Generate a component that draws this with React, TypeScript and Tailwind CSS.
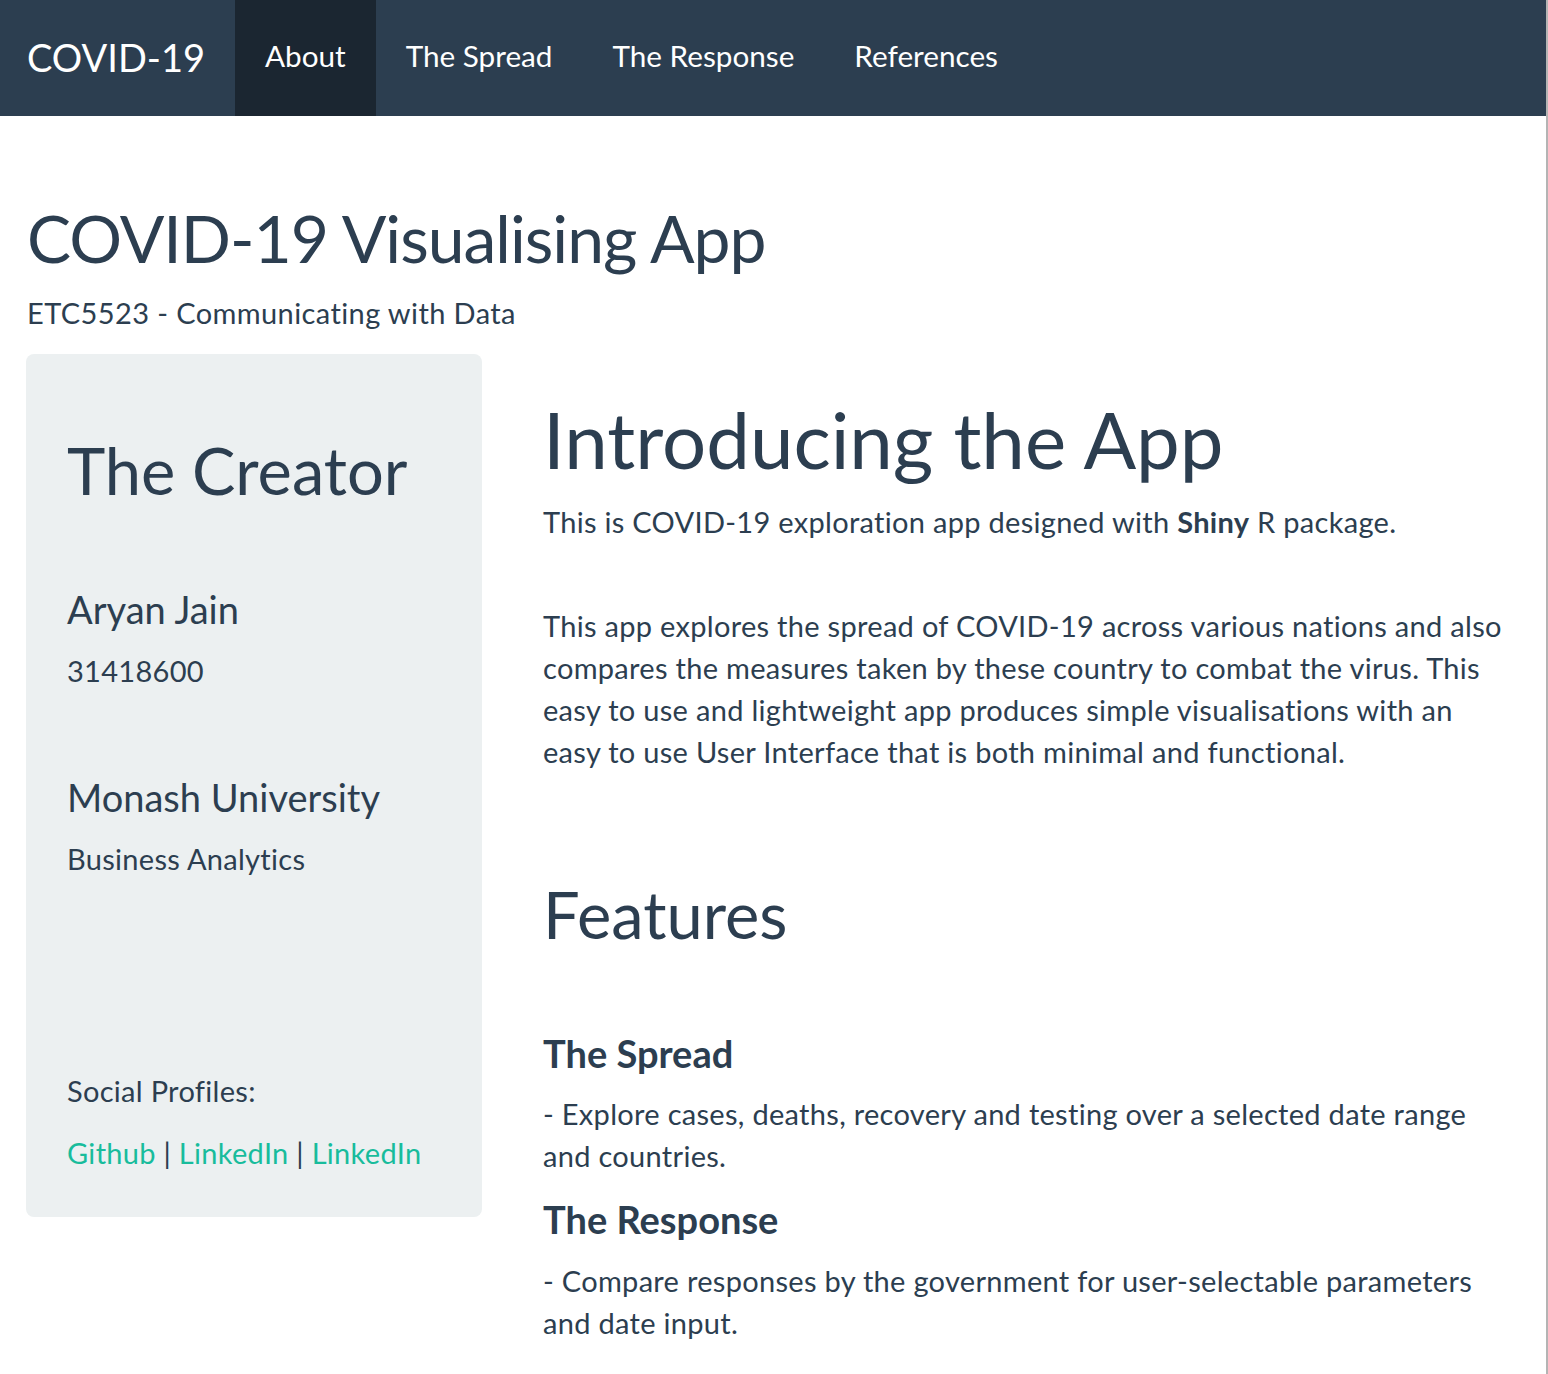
import React from "react";

export default function App() {
  const font = { fontFamily: "Lato, 'Open Sans', sans-serif" };
  const body = "text-[29px] leading-[42px] tracking-[0.3px]";
  const link = "flex items-center px-[30px] pb-[3px] text-[29.7px]";
  return (
    <div
      className="w-[1548px] min-h-[1374px] bg-white text-[#2c3e50] border-r-2 border-[#b4b4b4]"
      style={font}
    >
      <nav className="h-[116px] bg-[#2c3e50] flex items-stretch text-white">
        <div className="flex items-center pl-[27px] pr-[30px] pb-[2px] text-[38px]">COVID-19</div>
        <div className={`${link} bg-[#1b2631]`}>About</div>
        <div className={link}>The Spread</div>
        <div className={link}>The Response</div>
        <div className={link}>References</div>
      </nav>

      <h2 className="mt-[89px] ml-[27px] text-[66px] leading-none font-normal tracking-[-1px]">
        COVID-19 Visualising App
      </h2>
      <div className="mt-[27px] ml-[27px] text-[29px] leading-none tracking-[0.4px]">
        ETC5523 - Communicating with Data
      </div>

      <div className="mt-[27px] flex items-start">
        <aside className="ml-[26px] w-[456px] rounded-lg bg-[#ecf0f1] pl-[41px] pt-[84px] pb-[43px]">
          <h1 className="text-[65px] leading-none font-normal">The Creator</h1>
          <h3 className="mt-[87px] text-[38px] leading-none font-normal">Aryan Jain</h3>
          <p className={`mt-[22px] ${body}`}>31418600</p>
          <h3 className="mt-[86px] text-[38px] leading-none font-normal">Monash University</h3>
          <p className={`mt-[22px] ${body}`}>Business Analytics</p>
          <p className={`mt-[190px] ${body}`}>Social Profiles:</p>
          <p className={`mt-[20px] ${body}`}>
            <a className="text-[#18bc9c]">Github</a> | <a className="text-[#18bc9c]">LinkedIn</a> |{" "}
            <a className="text-[#18bc9c]">LinkedIn</a>
          </p>
        </aside>

        <main className="ml-[61px] w-[965px]">
          <h1 className="mt-[46px] text-[78px] leading-none font-normal">Introducing the App</h1>
          <p className={`mt-[23px] ${body}`}>
            This is COVID-19 exploration app designed with <b className="font-bold">Shiny</b> R package.
          </p>
          <p className={`mt-[62px] ${body}`}>
            This app explores the spread of COVID-19 across various nations and also compares the
            measures taken by these country to combat the virus. This easy to use and lightweight app
            produces simple visualisations with an easy to use User Interface that is both minimal and
            functional.
          </p>
          <h1 className="mt-[109px] text-[65px] leading-none font-normal">Features</h1>
          <h3 className="mt-[87px] text-[38px] leading-none font-bold">The Spread</h3>
          <p className={`mt-[21px] ${body}`}>
            - Explore cases, deaths, recovery and testing over a selected date range and countries.
          </p>
          <h3 className="mt-[23px] text-[38px] leading-none font-bold">The Response</h3>
          <p className={`mt-[22px] ${body}`}>
            - Compare responses by the government for user-selectable parameters and date input.
          </p>
        </main>
      </div>
    </div>
  );
}
